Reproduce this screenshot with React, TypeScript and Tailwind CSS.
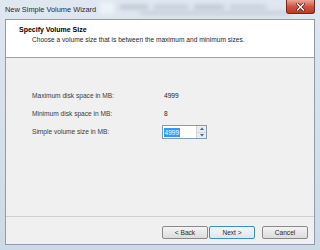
import React from "react";

const font = { fontFamily: '"Liberation Sans", Arial, sans-serif' };

export default function App() {
  return (
    <div
      className="w-[320px] h-[250px] flex flex-col bg-gradient-to-b from-[#dfe7f0] to-[#cdd9e5] overflow-hidden relative"
      style={font}
    >
      {/* blurred glass backdrop */}
      <div className="absolute left-[100px] top-[2px] w-[200px] h-[16px] blur-[2px] flex gap-[6px] opacity-70 pointer-events-none">
        <div className="w-[14px] h-[12px] bg-[#f3f7fc]" />
        <div className="w-[28px] h-[4px] mt-[3px] bg-[#aab5c2]" />
        <div className="w-[34px] h-[4px] mt-[3px] bg-[#b4bfcc]" />
        <div className="w-[30px] h-[4px] mt-[3px] bg-[#aab5c2]" />
        <div className="w-[36px] h-[4px] mt-[3px] bg-[#b8c2ce]" />
      </div>
      <div className="absolute left-[140px] top-[11px] w-[150px] h-[4px] blur-[2px] bg-[#bcc6d1] opacity-70 pointer-events-none" />

      {/* Title bar */}
      <div className="h-[19px] flex items-start relative">
        <div className="pl-[5px] pt-[5px] text-[7.4px] leading-[10px] text-[#1e2b38]">
          New Simple Volume Wizard
        </div>
        <div className="absolute right-[5px] top-0 w-[29px] h-[14px] rounded-b-[3px] border border-t-0 border-[#6b2a20] bg-gradient-to-b from-[#e9a597] via-[#d2543e] to-[#c0381f] flex items-center justify-center">
          <svg width="9" height="8" viewBox="0 0 9 8">
            <path d="M1.5 1 L7.5 7 M7.5 1 L1.5 7" stroke="#3a1712" strokeWidth="2.6" strokeLinecap="square" />
            <path d="M1.5 1 L7.5 7 M7.5 1 L1.5 7" stroke="#ffffff" strokeWidth="1.4" strokeLinecap="square" />
          </svg>
        </div>
      </div>

      {/* Client area */}
      <div className="flex-1 mx-[5px] mb-[5px] border border-[#8e9cab] bg-[#f0f0f0] flex flex-col text-[6.6px] text-[#1f1f1f] relative">
        {/* Header */}
        <div className="h-[38px] bg-white border-b border-[#a0a0a0] flex flex-col pt-[5px]">
          <div className="pl-[13px] font-bold leading-[10px] text-[7px] text-black">Specify Volume Size</div>
          <div className="pl-[26px] leading-[10px]">
            Choose a volume size that is between the maximum and minimum sizes.
          </div>
        </div>

        {/* Body */}
        <div className="h-[158px] pt-[29px] pl-[26px] flex flex-col">
          <div className="h-[18px] flex items-center">
            <div className="w-[132px] text-[#3b3b3b]">Maximum disk space in MB:</div>
            <div>4999</div>
          </div>
          <div className="h-[18px] flex items-center">
            <div className="w-[132px] text-[#3b3b3b]">Minimum disk space in MB:</div>
            <div>8</div>
          </div>
          <div className="h-[18px] flex items-center">
            <div className="w-[130px] text-[#3b3b3b]">Simple volume size in MB:</div>
            <div className="w-[45px] h-[14px] flex border border-[#7f9db9] bg-white">
              <div className="flex-1 flex items-center pl-[1px]">
                <span className="bg-[#3399ff] text-white leading-[9px] px-[0.5px]">4999</span>
              </div>
              <div className="w-[10px] flex flex-col border-l border-[#d5d5d5] bg-[#ececec]">
                <div className="flex-1 flex items-center justify-center border-b border-[#d5d5d5]">
                  <svg width="4" height="3" viewBox="0 0 4 3"><path d="M0 3 L2 0.5 L4 3 Z" fill="#44618a" /></svg>
                </div>
                <div className="flex-1 flex items-center justify-center">
                  <svg width="4" height="3" viewBox="0 0 4 3"><path d="M0 0 L2 2.5 L4 0 Z" fill="#44618a" /></svg>
                </div>
              </div>
            </div>
          </div>
        </div>

        {/* Separator */}
        <div className="border-t border-[#d0d0d0]" />

        {/* Buttons */}
        <div className="flex-1 flex items-start pt-[9px] pr-[6px] justify-end">
          <button className="w-[46px] h-[13px] rounded-[2px] border border-[#8a8a8a] bg-gradient-to-b from-[#f4f4f4] to-[#dcdcdc] text-[6.6px] leading-[11px] text-[#2a2a2a]" style={font}>
            &lt; Back
          </button>
          <button className="ml-[1px] w-[46px] h-[13px] rounded-[2px] border border-[#3c8fcf] bg-gradient-to-b from-[#f2f7fb] to-[#dfe6ec] text-[6.6px] leading-[11px] text-[#2a2a2a]" style={font}>
            Next &gt;
          </button>
          <button className="ml-[7px] w-[46px] h-[13px] rounded-[2px] border border-[#8a8a8a] bg-gradient-to-b from-[#f4f4f4] to-[#dcdcdc] text-[6.6px] leading-[11px] text-[#2a2a2a]" style={font}>
            Cancel
          </button>
        </div>
      </div>
    </div>
  );
}
